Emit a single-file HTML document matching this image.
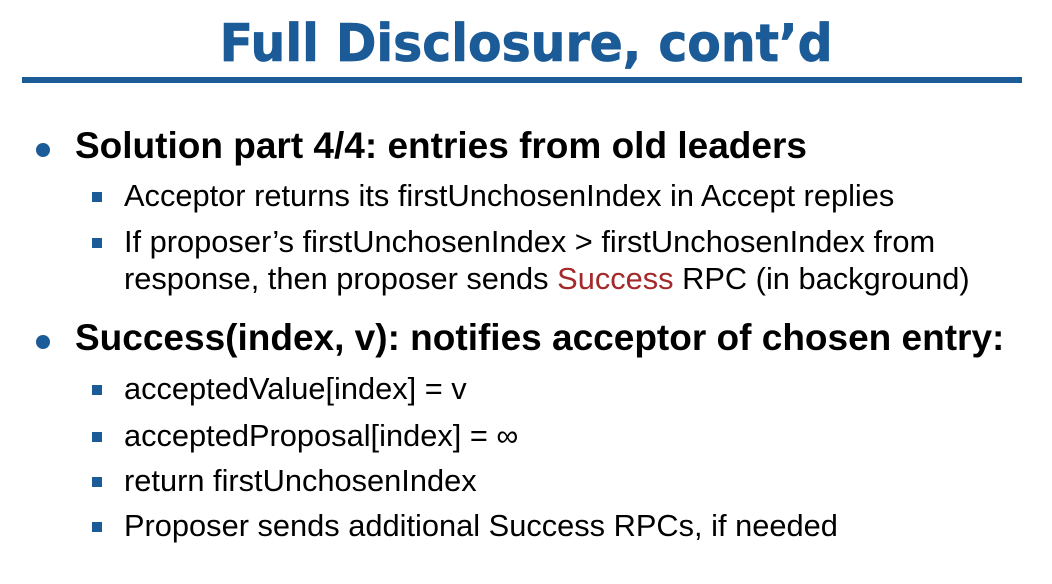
<!DOCTYPE html>
<html><head><meta charset="utf-8"><style>
html,body{margin:0;padding:0;background:#fff;}
body{width:1052px;height:584px;position:relative;overflow:hidden;font-family:"Liberation Sans",Arial,sans-serif;color:#000;}
.t{position:absolute;left:0;width:1052px;top:14px;text-align:center;font-family:"DejaVu Sans",Verdana,sans-serif;font-weight:bold;font-size:52px;line-height:60px;color:#1b5b97;}
.t span{display:inline-block;transform:scaleX(0.94);transform-origin:center;-webkit-text-stroke:0.8px #1b5b97;}
.rule{position:absolute;left:22px;width:1000px;top:77px;height:6px;background:#1b5b97;}
.l1{position:absolute;left:75px;font-size:37px;font-weight:bold;line-height:37px;white-space:nowrap;}
.l2{position:absolute;left:124px;font-size:30.8px;line-height:30.8px;white-space:nowrap;}
.dot{position:absolute;left:36px;width:14px;height:14px;border-radius:50%;background:#1b5b97;}
.sq{position:absolute;left:92px;width:10px;height:10px;background:#1b5b97;}
.red{color:#a3292b;}
</style></head><body>
<div class="t"><span>Full Disclosure, cont’d</span></div>
<div class="rule"></div>

<div class="dot" style="top:143px"></div>
<div class="l1" style="top:127px">Solution part 4/4: entries from old leaders</div>

<div class="sq" style="top:192px"></div>
<div class="l2" style="top:181px">Acceptor returns its firstUnchosenIndex in Accept replies</div>

<div class="sq" style="top:238px"></div>
<div class="l2" style="top:227px">If proposer’s firstUnchosenIndex &gt; firstUnchosenIndex from</div>
<div class="l2" style="top:264px">response, then proposer sends <span class="red">Success</span> RPC (in background)</div>

<div class="dot" style="top:335px"></div>
<div class="l1" style="top:319px">Success(index, v): notifies acceptor of chosen entry:</div>

<div class="sq" style="top:385px"></div>
<div class="l2" style="top:374px">acceptedValue[index] = v</div>
<div class="sq" style="top:432px"></div>
<div class="l2" style="top:421px">acceptedProposal[index] = ∞</div>
<div class="sq" style="top:477px"></div>
<div class="l2" style="top:466px">return firstUnchosenIndex</div>
<div class="sq" style="top:522px"></div>
<div class="l2" style="top:511px">Proposer sends additional Success RPCs, if needed</div>
</body></html>
